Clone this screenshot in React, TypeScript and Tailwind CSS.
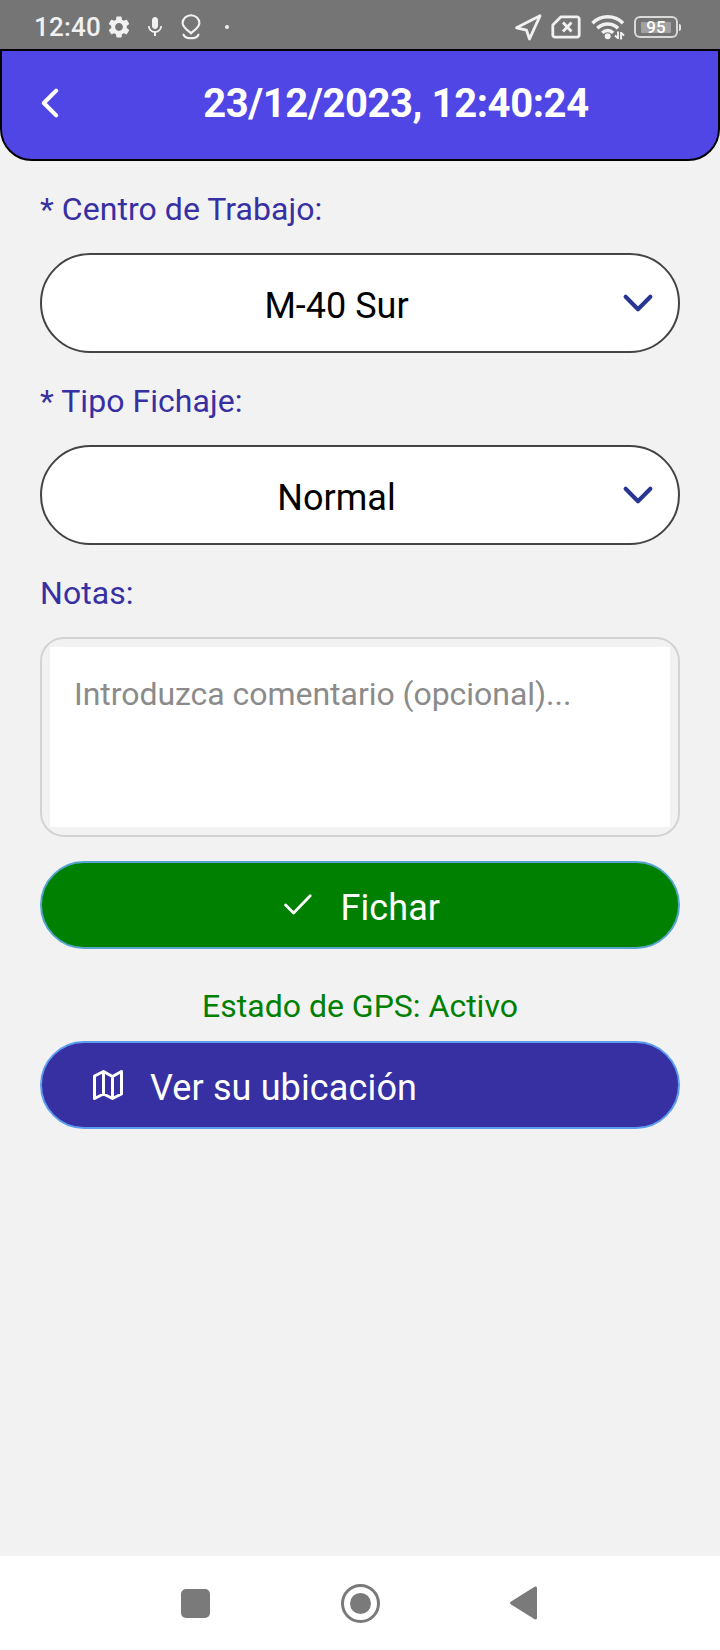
import React from "react";
import { MdMic, MdSettings } from "react-icons/md";

interface SelectFieldProps {
  label: string;
  value: string;
}

const StatusBar: React.FC = () => (
  <div className="flex h-[49px] items-center justify-between bg-[#757575] pt-[5px] pr-[39px] pl-[34px] text-[#f1f1f1]">
    <div className="flex items-center">
      <span className="w-[72px] text-[26px] leading-8 font-medium tracking-[0.2px]">12:40</span>
      <MdSettings className="size-[26px]" />
      <MdMic className="ml-[11px] size-[24px]" />
      <svg className="ml-[14px] h-[26px] w-5" viewBox="0 0 20 26" fill="none" stroke="currentColor" strokeWidth={2.1}>
        <path d="M10 19.300C8 17 1.600 13.800 1.600 9a8.400 7.800 0 0 1 16.800 0c0 4.800-6.400 8-8.400 10.300z" />
        <path d="M2.500 20.700c.9 2.200 2.900 3.400 5 3.400h5c2.100 0 4.100-1.200 5-3.400" strokeLinecap="round" />
      </svg>
      <span className="ml-6 size-1 rounded-full bg-current" />
    </div>
    <div className="flex items-center">
      <svg className="h-7 w-7" viewBox="0 0 28 28" fill="none" stroke="currentColor" strokeWidth={2.8} strokeLinejoin="round">
        <path d="M2.500 14.800L26 2.800 15.500 26l-3-8.800z" />
      </svg>
      <svg className="ml-[9px] h-6 w-[30px]" viewBox="0 0 30 24" fill="none" stroke="currentColor" strokeWidth={2.8}>
        <path d="M10 1.800h16a2.200 2.200 0 0 1 2.200 2.200v16a2.200 2.200 0 0 1-2.200 2.200H4A2.200 2.200 0 0 1 1.800 20V10z" strokeLinejoin="round" />
        <path d="M12 7.500l8.500 9M20.500 7.500l-8.500 9" />
      </svg>
      <svg className="ml-[10px] h-[26px] w-[34px]" viewBox="0 0 34 26" fill="none" stroke="currentColor" strokeWidth={3.5}>
        <path d="M1.500 9.200a21.500 21.500 0 0 1 30.500 0" />
        <path d="M6.300 14.300a14.500 14.500 0 0 1 20.800 0" />
        <path d="M11.300 18.900a7.500 7.500 0 0 1 10.800 0" />
        <circle cx="16.700" cy="22.200" r="3" fill="currentColor" stroke="none" />
        <path d="M27 17.500v7.500M24 21.500l3 2.800M30 25.500v-7.500M33 21.500l-3-2.800" strokeWidth={1.900} />
      </svg>
      <div className="ml-[9px] flex h-[22px] w-[44px] items-center justify-center rounded-[6px] border-2 border-[#d9d9d9]">
        <span className="flex h-[11px] w-[30px] items-center justify-center bg-[#a0a0a0] text-[17px] leading-none font-medium text-white">
          95
        </span>
      </div>
      <span className="ml-px h-[7px] w-[2px] rounded-r bg-[#e8e8e8]" />
    </div>
  </div>
);

const Label: React.FC<{ children: React.ReactNode }> = ({ children }) => (
  <div className="mt-7 mb-6 text-[32px] leading-10 tracking-[0.05px] text-[#3730a3]">{children}</div>
);

const SelectField: React.FC<SelectFieldProps> = ({ label, value }) => (
  <>
    <Label>{label}</Label>
    <button className="flex h-[100px] w-full items-center rounded-full border-2 border-[#444444] bg-white pr-[18px] pl-[15px] text-black">
      <span className="mt-[5px] flex-1 text-center text-[36px] leading-10">{value}</span>
      <svg
        className="size-[44px]"
        fill="none"
        stroke="#283593"
        viewBox="0 0 512 512"
        aria-hidden="true"
      >
        <path strokeLinecap="round" strokeLinejoin="round" strokeWidth={48} d="M112 184l144 144 144-144" />
      </svg>
    </button>
  </>
);

const NavBar: React.FC = () => (
  <div className="flex h-[94px] items-center justify-center bg-white pr-px text-[#7a7a7a]">
    <div className="mr-[131px] size-[29px] rounded-[5px] bg-current" />
    <div className="flex size-[39px] items-center justify-center rounded-full border-[3px] border-current">
      <div className="size-[21px] rounded-full bg-current" />
    </div>
    <svg className="ml-[130px] h-[34px] w-[28px]" viewBox="0 0 28 34" fill="currentColor">
      <path d="M.7 15.700L24.600.7Q27 0 27 2v30q0 2-2.400 1.300L.7 18.300q-1.400-1.300 0-2.600z" />
    </svg>
  </div>
);

const App: React.FC = () => {
  return (
    <div className="flex h-[1650px] w-[720px] flex-col bg-[#f2f2f2] font-['Roboto',sans-serif]">
      <StatusBar />
      <header className="flex h-28 items-center rounded-b-[32px] border-2 border-black bg-[#4f46e5] pb-1 text-white">
        <svg
          className="ml-[26px] size-[44px]"
          fill="none"
          stroke="currentColor"
          viewBox="0 0 512 512"
          aria-hidden="true"
        >
          <path strokeLinecap="round" strokeLinejoin="round" strokeWidth={48} d="M328 112L184 256l144 144" />
        </svg>
        <h1 className="mt-[2px] flex-1 pl-[2px] text-center text-[40px] leading-12 font-bold tracking-[-0.39px]">
          23/12/2023, 12:40:24
        </h1>
      </header>

      <main className="flex-1 px-10">
        <SelectField label="* Centro de Trabajo:" value="M-40 Sur" />
        <SelectField label="* Tipo Fichaje:" value="Normal" />

        <Label>Notas:</Label>
        <div className="h-[200px] rounded-[24px] border-2 border-[#d3d3d3] p-2">
          <textarea
            className="block h-[180px] w-full resize-none bg-white px-6 pt-[27px] text-[32px] leading-10 tracking-[-0.04px] placeholder:text-[#8b8b8b] focus:outline-none"
            placeholder="Introduzca comentario (opcional)..."
          />
        </div>

        <button className="mt-6 flex h-[88px] w-full items-center rounded-full border-2 border-[#55a5cf] bg-[#008000] pl-[242px] text-[36px] leading-10 text-white">
          <svg className="h-[22px] w-[29px]" viewBox="0 0 29 22" fill="none" stroke="currentColor" aria-hidden="true">
            <path strokeLinecap="round" strokeLinejoin="round" strokeWidth={2.800} d="M1.600 11l8 8L26.200 1.700" />
          </svg>
          <span className="mt-[5px] ml-[27.5px] tracking-[0.08px]">Fichar</span>
        </button>

        <p className="mt-[37px] mb-[15px] text-center text-[32px] leading-10 text-[#008000]">
          Estado de GPS: Activo
        </p>

        <button className="flex h-[88px] w-full items-center rounded-full border-2 border-[#5c9df0] bg-[#3730a3] pl-[51px] text-[36px] leading-10 text-white">
          <svg className="size-[30px]" viewBox="0 0 30 30" fill="none" stroke="currentColor" aria-hidden="true">
            <path
              strokeLinejoin="round"
              strokeWidth={3}
              d="M1.500 6l9-4.500 9 5 9-5V24l-9 4.500-9-4.500-9 4.500zM10.500 1.500V24M19.500 6.500v22"
            />
          </svg>
          <span className="mt-[5px] ml-[27px] tracking-[0.13px]">Ver su ubicación</span>
        </button>
      </main>

      <NavBar />
    </div>
  );
};

export default App;
